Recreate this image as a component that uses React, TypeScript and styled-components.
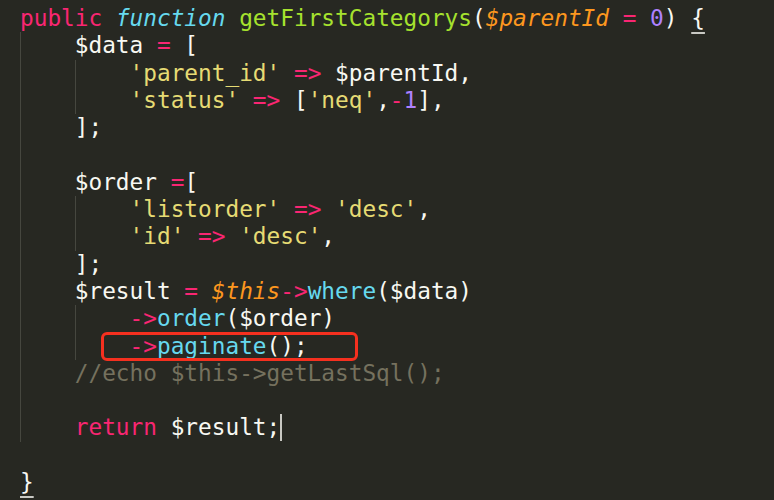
import React from "react";
import styled, { createGlobalStyle, css } from "styled-components";

const GlobalStyle = createGlobalStyle`
  html, body {
    margin: 0;
    padding: 0;
    background: #272822;
  }
  #root {
    min-height: 500px;
    background: #272822;
  }
`;

type Kind = "plain" | "keyword" | "storage" | "fn" | "param" | "num" | "str" | "op" | "comment" | "call" | "var";

const colors: Record<Kind, string> = {
  plain: "#f8f8f2",
  keyword: "#f92672",
  storage: "#66d9ef",
  fn: "#a6e22e",
  param: "#fd971f",
  num: "#ae81ff",
  str: "#e6db74",
  op: "#f92672",
  comment: "#75715e",
  call: "#66d9ef",
  var: "#fd971f",
};

const Editor = styled.div`
  box-sizing: border-box;
  width: 774px;
  height: 500px;
  overflow: hidden;
  padding: 5px 0 0 20px;
  background: #272822;
  font-family: "DejaVu Sans Mono", "Liberation Mono", monospace;
  font-size: 22.75px;
  line-height: 27.3px;
  color: #f8f8f2;
`;

const Line = styled.div`
  position: relative;
  height: 27.3px;
  white-space: pre;
`;

const Guide = styled.span`
  display: inline-block;
  width: 4ch;
  height: 27.3px;
  vertical-align: top;
  box-shadow: inset 1px 0 0 #46473f;
`;

const Token = styled.span<{ $kind: Kind }>`
  color: ${(p) => colors[p.$kind]};
  ${(p) =>
    (p.$kind === "storage" || p.$kind === "param" || p.$kind === "var") &&
    css`
      font-style: italic;
    `}
`;

const Matched = styled.span`
  text-decoration: underline;
  text-decoration-color: #c9c9c4;
  text-decoration-thickness: 2px;
  text-underline-offset: 6px;
`;

const Cursor = styled.span`
  display: inline-block;
  width: 0;
  height: 26.5px;
  vertical-align: -5.5px;
  border-left: 2px solid #c8c8c2;
`;

const Highlight = styled.span`
  position: absolute;
  left: 81px;
  top: -1px;
  width: 257px;
  height: 29.5px;
  box-sizing: border-box;
  border: 3px solid #f5301f;
  border-radius: 6px;
  pointer-events: none;
`;

type Tok = [Kind, string] | ["match", string] | ["cursor"];

interface CodeLine {
  indent: number;
  tokens: Tok[];
  boxed?: boolean;
}

const lines: CodeLine[] = [
  {
    indent: 0,
    tokens: [
      ["keyword", "public"],
      ["plain", " "],
      ["storage", "function"],
      ["plain", " "],
      ["fn", "getFirstCategorys"],
      ["plain", "("],
      ["param", "$parentId"],
      ["plain", " "],
      ["op", "="],
      ["plain", " "],
      ["num", "0"],
      ["plain", ") "],
      ["match", "{"],
    ],
  },
  { indent: 1, tokens: [["plain", "$data "], ["op", "="], ["plain", " ["]] },
  { indent: 2, tokens: [["str", "'parent_id'"], ["plain", " "], ["op", "=>"], ["plain", " $parentId,"]] },
  {
    indent: 2,
    tokens: [
      ["str", "'status'"],
      ["plain", " "],
      ["op", "=>"],
      ["plain", " ["],
      ["str", "'neq'"],
      ["plain", ","],
      ["op", "-"],
      ["num", "1"],
      ["plain", "],"],
    ],
  },
  { indent: 1, tokens: [["plain", "];"]] },
  { indent: 1, tokens: [] },
  { indent: 1, tokens: [["plain", "$order "], ["op", "="], ["plain", "["]] },
  { indent: 2, tokens: [["str", "'listorder'"], ["plain", " "], ["op", "=>"], ["plain", " "], ["str", "'desc'"], ["plain", ","]] },
  { indent: 2, tokens: [["str", "'id'"], ["plain", " "], ["op", "=>"], ["plain", " "], ["str", "'desc'"], ["plain", ","]] },
  { indent: 1, tokens: [["plain", "];"]] },
  {
    indent: 1,
    tokens: [
      ["plain", "$result "],
      ["op", "="],
      ["plain", " "],
      ["var", "$this"],
      ["op", "->"],
      ["call", "where"],
      ["plain", "($data)"],
    ],
  },
  { indent: 2, tokens: [["op", "->"], ["call", "order"], ["plain", "($order)"]] },
  { indent: 2, tokens: [["op", "->"], ["call", "paginate"], ["plain", "();"]], boxed: true },
  { indent: 1, tokens: [["comment", "//echo $this->getLastSql();"]] },
  { indent: 1, tokens: [] },
  { indent: 1, tokens: [["keyword", "return"], ["plain", " $result;"], ["cursor"]] },
  { indent: 0, tokens: [] },
  { indent: 0, tokens: [["match", "}"]] },
];

function renderToken(t: Tok, i: number) {
  if (t[0] === "cursor") return <Cursor key={i} />;
  if (t[0] === "match") return <Matched key={i}>{t[1]}</Matched>;
  return (
    <Token key={i} $kind={t[0]}>
      {t[1]}
    </Token>
  );
}

export default function App() {
  return (
    <>
      <GlobalStyle />
      <Editor>
        {lines.map((l, i) => (
          <Line key={i}>
            {Array.from({ length: l.indent }).map((_, g) => (
              <Guide key={`g${g}`} />
            ))}
            {l.tokens.map(renderToken)}
            {l.boxed && <Highlight />}
          </Line>
        ))}
      </Editor>
    </>
  );
}
